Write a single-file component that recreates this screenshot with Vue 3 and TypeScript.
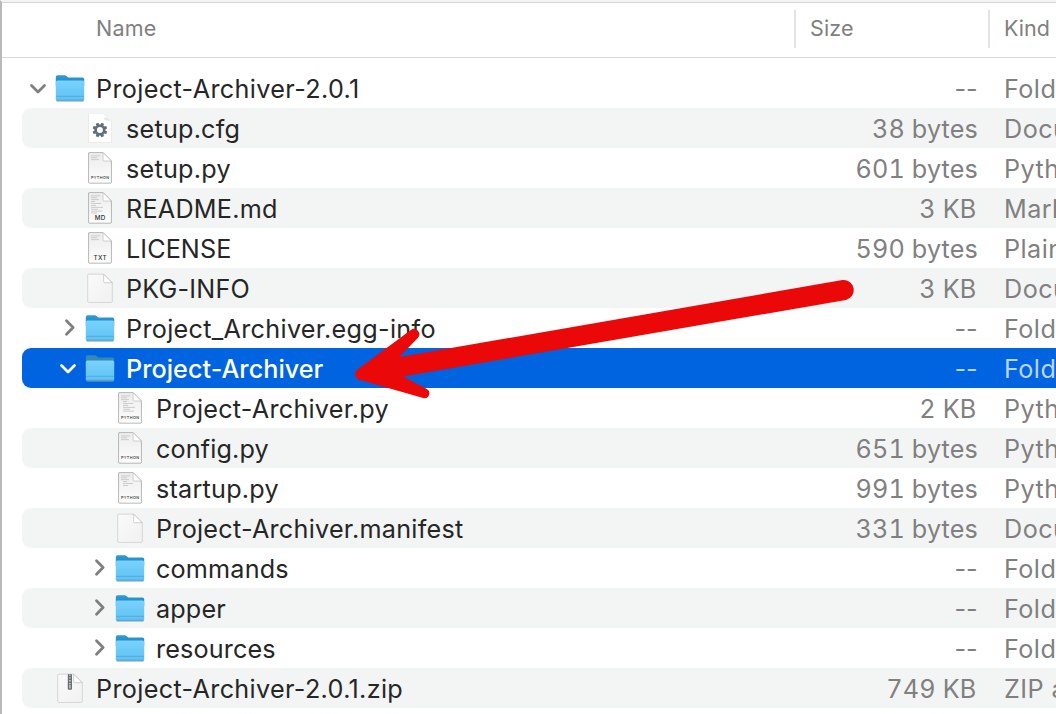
<script setup lang="ts">
type Icon = 'folder' | 'gear' | 'python' | 'md' | 'txt' | 'blank' | 'zip'

interface Entry {
  name: string
  icon: Icon
  level: number
  size: string
  kind: string
  open?: boolean
  selected?: boolean
  // number of preview lines printed on a document icon
  lines?: number
  // letter spacing of the name, in px
  track: number
}

const entries: Entry[] = [
  { name: 'Project-Archiver-2.0.1', icon: 'folder', level: 0, size: '--', kind: 'Folder', open: true, track: 0.35 },
  { name: 'setup.cfg', icon: 'gear', level: 1, size: '38 bytes', kind: 'Document', track: 0.22 },
  { name: 'setup.py', icon: 'python', level: 1, size: '601 bytes', kind: 'Python Script', lines: 3, track: 0.25 },
  { name: 'README.md', icon: 'md', level: 1, size: '3 KB', kind: 'Markdown', lines: 10, track: 0.24 },
  { name: 'LICENSE', icon: 'txt', level: 1, size: '590 bytes', kind: 'Plain Text', lines: 3, track: 0.08 },
  { name: 'PKG-INFO', icon: 'blank', level: 1, size: '3 KB', kind: 'Document', track: 0.2 },
  { name: 'Project_Archiver.egg-info', icon: 'folder', level: 1, size: '--', kind: 'Folder', open: false, track: 0.3 },
  { name: 'Project-Archiver', icon: 'folder', level: 1, size: '--', kind: 'Folder', open: true, selected: true, track: 0.03 },
  { name: 'Project-Archiver.py', icon: 'python', level: 2, size: '2 KB', kind: 'Python Script', lines: 9, track: 0.24 },
  { name: 'config.py', icon: 'python', level: 2, size: '651 bytes', kind: 'Python Script', lines: 3, track: 0.14 },
  { name: 'startup.py', icon: 'python', level: 2, size: '991 bytes', kind: 'Python Script', lines: 6, track: 0.22 },
  { name: 'Project-Archiver.manifest', icon: 'blank', level: 2, size: '331 bytes', kind: 'Document', track: 0.25 },
  { name: 'commands', icon: 'folder', level: 2, size: '--', kind: 'Folder', open: false, track: 0.18 },
  { name: 'apper', icon: 'folder', level: 2, size: '--', kind: 'Folder', open: false, track: 0.15 },
  { name: 'resources', icon: 'folder', level: 2, size: '--', kind: 'Folder', open: false, track: 0.13 },
  { name: 'Project-Archiver-2.0.1.zip', icon: 'zip', level: 0, size: '749 KB', kind: 'ZIP archive', track: 0.33 },
]

const labels: Partial<Record<Icon, string>> = { python: 'PYTHON', md: 'MD', txt: 'TXT' }
const lineWidths = [9, 6, 8, 4, 10, 5, 12, 7, 11, 6]
const teeth = [0, 45, 90, 135, 180, 225, 270, 315]

function sizeClass(size: string): string {
  if (size === '--') return 'none'
  return size.endsWith('KB') ? 'kb' : 'bytes'
}
</script>

<template>
  <main class="finder">
    <header class="columns">
      <span class="col-name">Name</span>
      <span class="col-size">Size</span>
      <span class="col-kind">Kind</span>
    </header>

    <svg class="defs" width="0" height="0" aria-hidden="true">
      <defs>
        <linearGradient id="front" x1="0" y1="0" x2="0" y2="1">
          <stop offset="0" stop-color="#7ad2fc" />
          <stop offset="1" stop-color="#5fc1f3" />
        </linearGradient>
        <linearGradient id="back" x1="0" y1="0" x2="0" y2="1">
          <stop offset="0" stop-color="#2f9cd8" />
          <stop offset="1" stop-color="#1682c4" />
        </linearGradient>
        <linearGradient id="paper" x1="0" y1="0" x2="0" y2="1">
          <stop offset="0" stop-color="#ececec" />
          <stop offset="1" stop-color="#fdfdfd" />
        </linearGradient>
        <linearGradient id="plain" x1="0" y1="0" x2="1" y2="1">
          <stop offset="0" stop-color="#fafafa" />
          <stop offset="1" stop-color="#f1f1f1" />
        </linearGradient>
      </defs>
    </svg>

    <ul class="rows">
      <li v-for="e in entries" :key="e.name" class="row" :class="[{ selected: e.selected }, 'level-' + e.level]">
        <div class="name">
          <span class="toggle">
            <svg v-if="e.open === true" class="down" viewBox="0 0 20 20">
              <path d="M3.5 7.6 10 14 16.5 7.6" />
            </svg>
            <svg v-else-if="e.open === false" class="right" viewBox="0 0 20 20">
              <path d="M8.5 2.8 15.1 9.5 8.5 16.2" />
            </svg>
          </span>

          <svg v-if="e.icon === 'folder'" class="icon" viewBox="0 0 30 32">
            <path class="shade" d="M1.4 27.6h27.4v1.2a1 1 0 0 1-1 1H2.4a1 1 0 0 1-1-1z" />
            <path class="back" d="M.8 5.2q0-2 1.8-2h7.1q1 0 1.8.7l1.2 1q.7.5 1.6.5h13.2q1.7 0 1.7 1.7V14H.8z" />
            <path d="M.8 10q0-1.5 1.5-1.5h25.4q1.5 0 1.5 1.5v17.2q0 1.400-1.5 1.400H2.300Q.8 28.600.8 27.200z" fill="url(#front)" />
            <path d="M1.200 24.400h27.600" stroke="#49a9dc" stroke-width=".8" />
            <path d="M1.500 28.200h27" stroke="#45a3d6" stroke-width=".9" />
          </svg>

          <svg v-else class="icon" viewBox="0 0 30 32">
            <template v-if="e.icon === 'gear'">
              <path class="sheet flat" d="M3.500 1.200H17.500L26.500 9v21.500h-23z" />
              <path d="M17.500 1.200q1.800 1.400 1.700 5 0 2.200 2.600 2.200 3.200 0 4.700 1.400z" fill="#e6e8e8" />
              <path d="M17.500 1.200q1.300 1.800 1.400 4.300 3.700-.3 7.600 4z" fill="#fff" />
              <g transform="translate(14.900 18)" fill="#5f7079">
                <rect v-for="a in teeth" :key="a" x="-1.500" y="-7.300" width="3" height="3.500" rx=".6" :transform="`rotate(${a + 22.5})`" />
                <circle r="4.300" fill="none" stroke="#5f7079" stroke-width="2.600" />
              </g>
            </template>

            <template v-else-if="e.icon === 'blank' || e.icon === 'zip'">
              <path class="sheet plain" d="M4 2.200H18.700L27.200 10.700V29.300a1 1 0 0 1-1 1H3.800a1 1 0 0 1-1-1V3.200a1 1 0 0 1 1.200-1z" />
              <path class="fold" d="M18.700 2.200V9.700a1 1 0 0 0 1 1h7.500z" />
              <template v-if="e.icon === 'zip'">
                <rect x="12.800" y="2" width="4.200" height="15.800" rx="1" fill="#6a6f72" />
                <path d="M14.900 2.500v10" stroke="#c6cacc" stroke-width="1.700" stroke-dasharray="1.300 1.500" />
                <rect x="14" y="13" width="1.800" height="3.400" rx=".6" fill="#b4b9bb" />
              </template>
            </template>

            <template v-else>
              <path class="sheet doc" d="M4.300 .6H18L26.400 9V30a1 1 0 0 1-1 1H4.600a1 1 0 0 1-1-1V1.600a1 1 0 0 1 .7-1z" />
              <g fill="#c2c2c2">
                <rect
                  v-for="n in e.lines"
                  :key="n"
                  :x="e.lines! > 3 && n > 3 && e.icon === 'python' ? 8 : 6"
                  :y="1.6 + n * 1.9"
                  :width="lineWidths[n - 1]"
                  height=".8"
                />
              </g>
              <path class="fold" d="M18 .6V8a1 1 0 0 0 1 1h7.400z" />
              <text x="15.200" :y="e.icon === 'python' ? 27.2 : 27.6" text-anchor="middle" :class="['tag', e.icon]">{{ labels[e.icon] }}</text>
            </template>
          </svg>

          <span class="label" :style="{ letterSpacing: e.track + 'px' }">{{ e.name }}</span>
        </div>
        <span class="size" :class="sizeClass(e.size)">{{ e.size }}</span>
        <span class="kind">{{ e.kind }}</span>
      </li>
    </ul>

    <svg class="pointer" viewBox="0 0 1056 714" aria-hidden="true">
      <path
        d="M357.400 369.800 410.800 330a5.300 5.300 0 0 1 7 7.900L399.300 357 842.500 280.100a10.100 10.100 0 0 1 3.300 19.900L403.200 376.400 426.800 388.900a5 5 0 0 1-3.700 9.200L358.600 379.400a5.500 5.500 0 0 1-1.200-9.600z"
      />
    </svg>
  </main>
</template>

<style>
body {
  margin: 0;
  overflow: hidden;
}
</style>

<style scoped>
.finder {
  position: relative;
  box-sizing: border-box;
  width: 1056px;
  height: 714px;
  overflow: hidden;
  border-left: 2px solid #b9b9bb;
  border-top: 2px solid #f3f3f3;
  background: #fff;
  color: #262626;
  font-family: Inter, 'Liberation Sans', sans-serif;
  font-size: 25.2px;
}
.columns {
  display: grid;
  grid-template-columns: 792px 194px 1fr;
  align-items: center;
  box-sizing: border-box;
  height: 56px;
  padding: 7px 0 9px;
  border-top: 1px solid #d6d6d6;
  border-bottom: 1px solid #d9d9d9;
  color: #808080;
  font-size: 21.5px;
}
.columns span {
  box-sizing: border-box;
  height: 38px;
  line-height: 37px;
}
.col-name {
  padding-left: 94px;
  letter-spacing: 0.2px;
}
.col-size,
.col-kind {
  border-left: 2px solid #e3e3e3;
  padding-left: 14px;
}
.col-size {
  letter-spacing: 0.15px;
}
.defs {
  position: absolute;
}
.rows {
  margin: 0;
  padding: 10px 0 0 20px;
  list-style: none;
}
.row {
  display: grid;
  grid-template-columns: 1fr 160px 78px;
  align-items: center;
  height: 40px;
  border-radius: 9px 0 0 9px;
  white-space: nowrap;
  line-height: 38px;
}
.row:nth-child(even) {
  background: #f3f5f4;
}
.row.selected {
  background: #0064e1;
  color: #fff;
}
.name {
  display: flex;
  align-items: center;
}
.level-1 .name {
  padding-left: 30px;
}
.level-2 .name {
  padding-left: 60px;
}
.toggle {
  width: 20px;
  height: 20px;
  margin: 0 7px 0 6px;
}
.toggle svg {
  display: block;
  width: 20px;
  height: 20px;
  fill: none;
  stroke: #7f7f7f;
  stroke-width: 2.8;
  stroke-linecap: round;
  stroke-linejoin: round;
}
.selected .toggle svg {
  stroke: #fff;
}
.icon {
  flex: none;
  width: 30px;
  height: 32px;
  margin-right: 11px;
  overflow: visible;
}
.shade {
  fill: #8b9aa3;
  opacity: 0.7;
}
.back {
  fill: url(#back);
}
.selected .back {
  fill: #3489b5;
}
.sheet {
  stroke-width: 0.6;
}
.sheet.flat {
  fill: #fff;
  filter: drop-shadow(0 0.7px 0.4px rgba(0, 0, 0, 0.25));
}
.sheet.plain {
  fill: url(#plain);
  stroke: #d3d3d3;
  filter: drop-shadow(0 0.5px 0.5px rgba(0, 0, 0, 0.2));
}
.sheet.doc {
  fill: url(#paper);
  stroke: #b5b5b5;
  filter: drop-shadow(0 0.6px 0.7px rgba(0, 0, 0, 0.5));
}
.fold {
  fill: #fff;
  stroke: #c4c4c4;
  stroke-width: 0.8;
}
.tag {
  fill: #333;
  font-weight: 500;
  letter-spacing: 0.4px;
}
.tag.python {
  font-size: 3.8px;
}
.tag.md,
.tag.txt {
  font-size: 6.3px;
}
.label,
.size,
.kind {
  padding-top: 2px;
}
.selected .label {
  font-weight: 500;
}
.size,
.kind {
  color: #808080;
}
.size {
  text-align: right;
}
.size.bytes,
.size.kb {
  font-variant-numeric: tabular-nums;
  letter-spacing: 0.15px;
}
.size.kb {
  padding-right: 1.6px;
}
.size.none {
  padding-right: 0.4px;
}
.kind {
  padding-left: 26px;
  letter-spacing: 0.45px;
}
.selected .size,
.selected .kind {
  color: #bcd4fa;
}
.pointer {
  position: absolute;
  top: -2px;
  left: -2px;
  width: 1056px;
  height: 714px;
  fill: #ea0808;
}
</style>
